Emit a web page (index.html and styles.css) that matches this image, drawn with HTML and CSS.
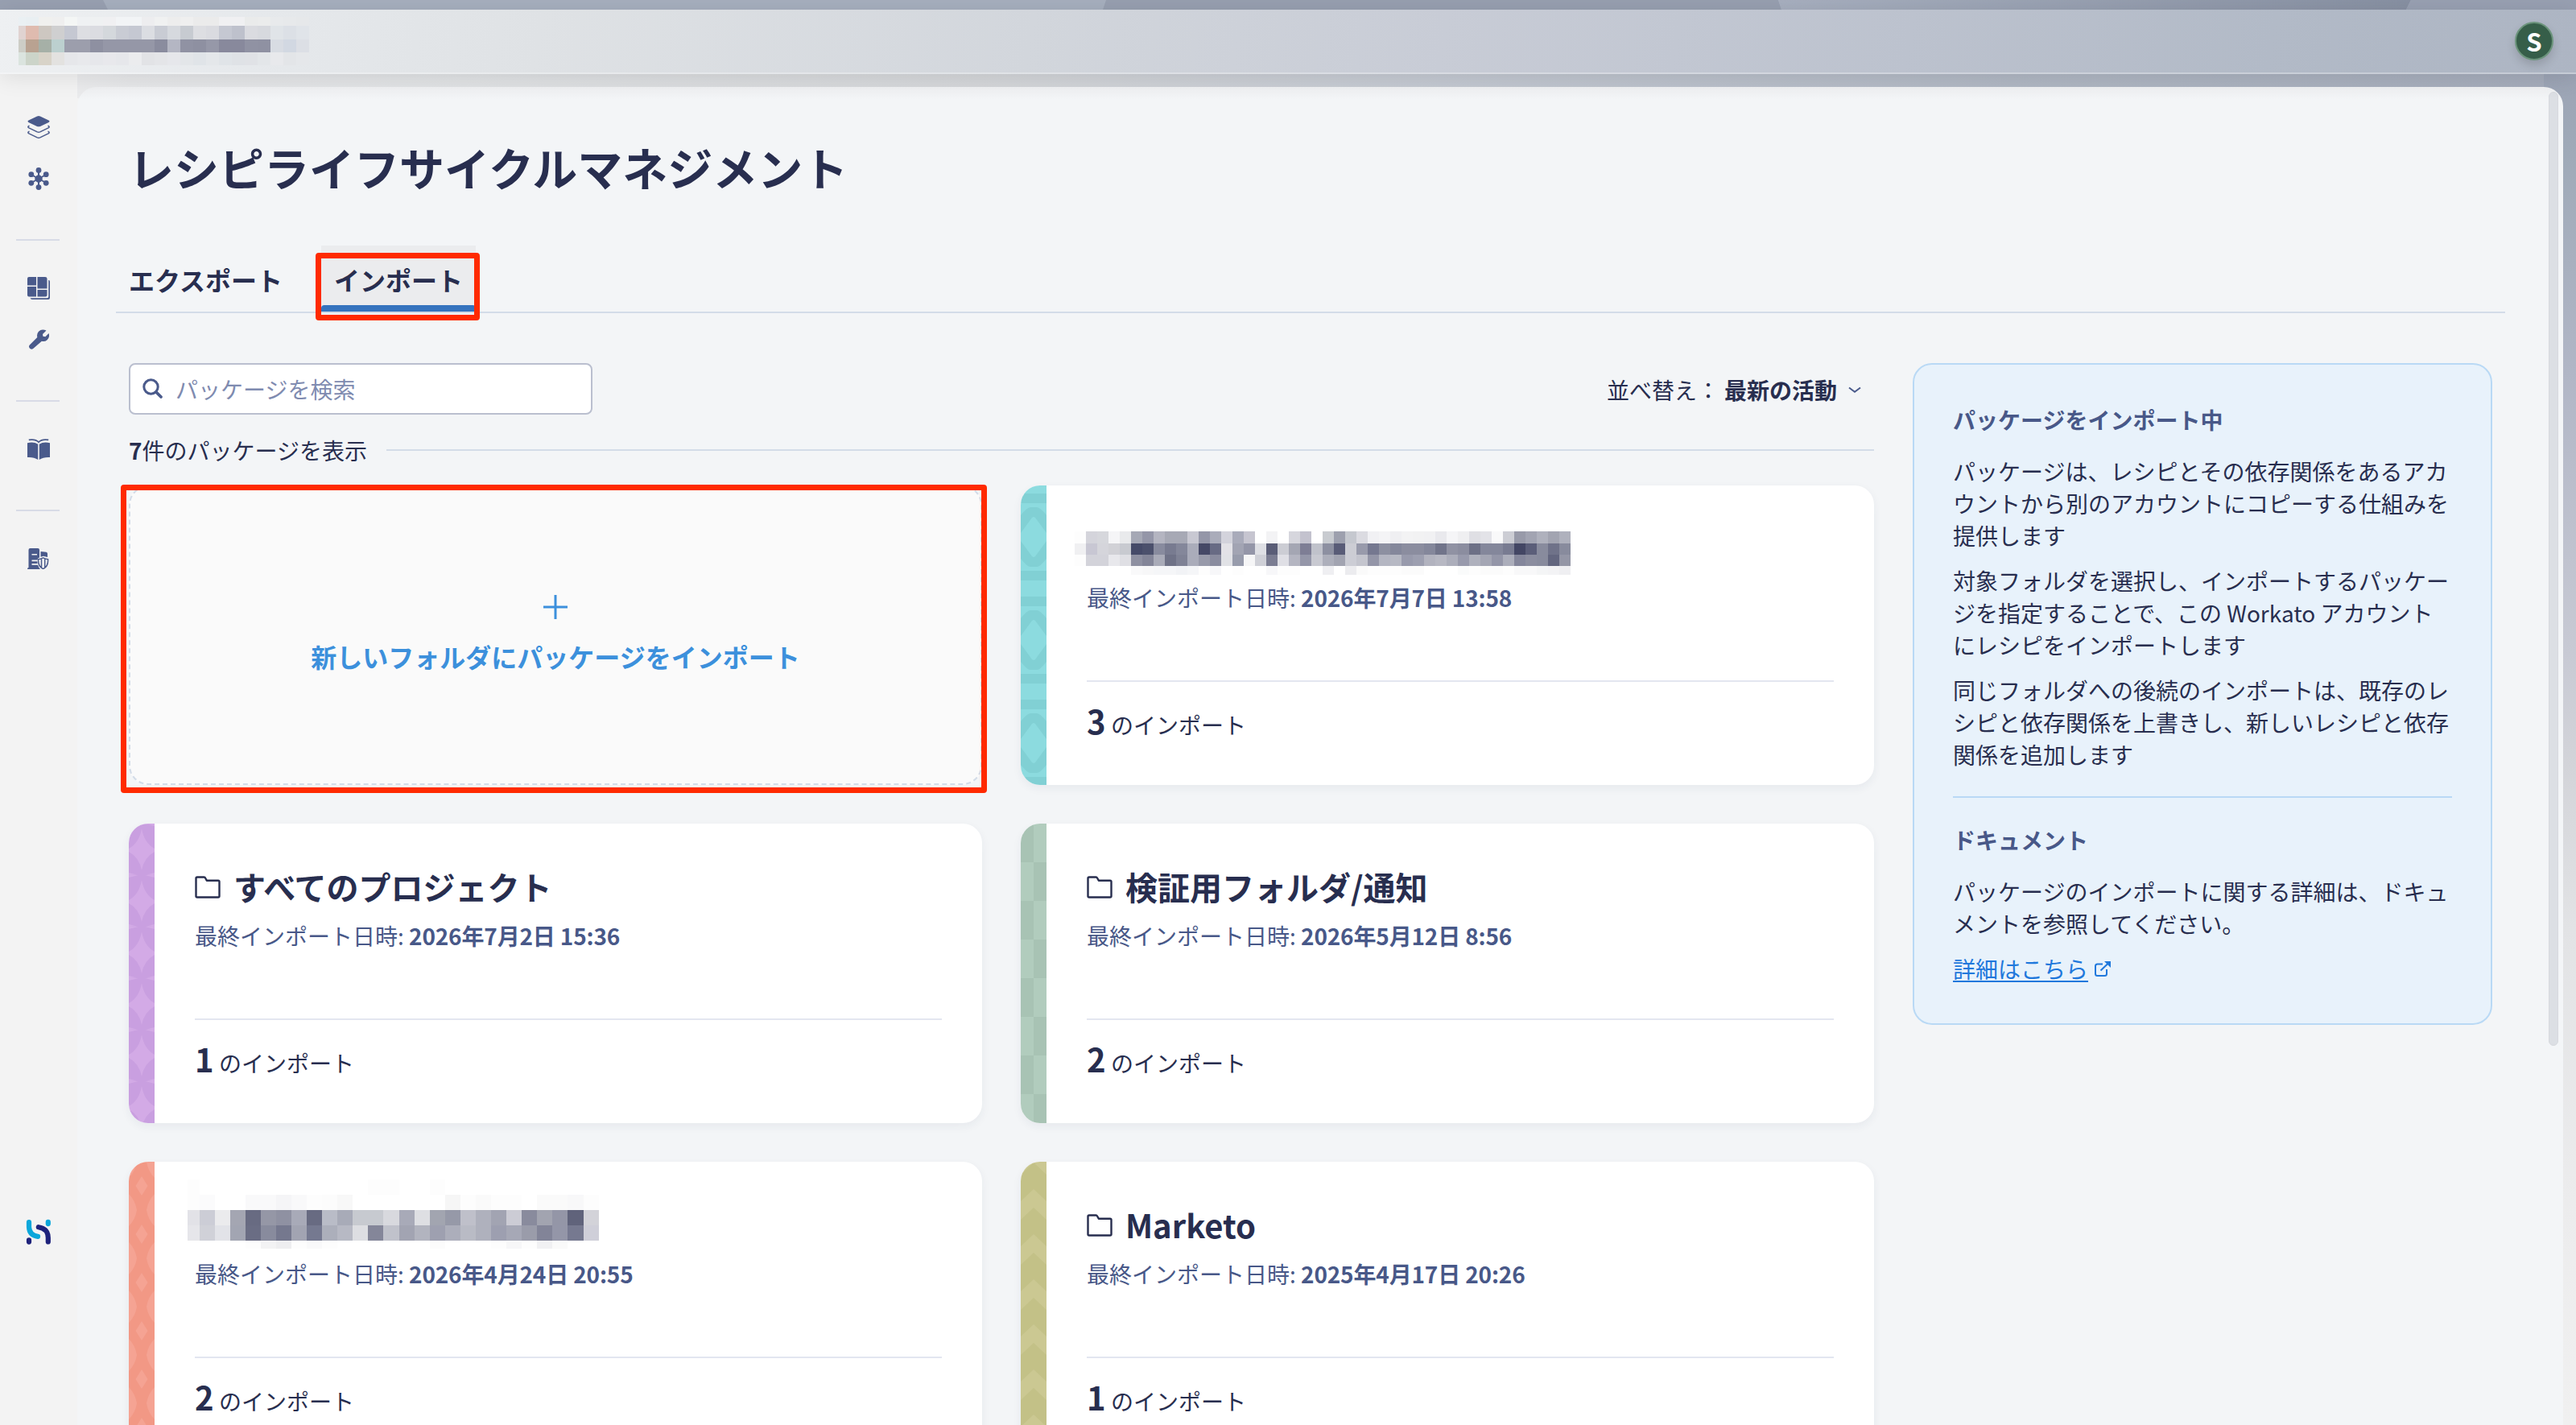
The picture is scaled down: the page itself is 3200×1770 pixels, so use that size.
FILE: index.html
```html
<!DOCTYPE html>
<html lang="ja">
<head>
<meta charset="utf-8">
<title>レシピライフサイクルマネジメント</title>
<link rel="stylesheet" href="styles.css">
</head>
<body>
<svg class="defs" width="0" height="0" aria-hidden="true">
  <defs>
    <pattern id="p-teal" width="32" height="128" patternUnits="userSpaceOnUse">
      <rect width="32" height="128" fill="#8cdbdf"/>
      <path fill="#81d0d4" d="M0 10h32v12H0zM0 106h32v12H0zM0 37Q8 27 12 27h8q4 0 12 10v54q-8 10-12 10h-8q-4 0-12-10z"/>
      <path fill="#8cdbdf" d="M0 59 14 40q2-2 4 0l14 19v10L18 88q-2 2-4 0L0 69z"/>
    </pattern>
    <pattern id="p-purple" width="32" height="64" patternUnits="userSpaceOnUse">
      <rect width="32" height="64" fill="#c99fe0"/>
      <path fill="#d3aae6" d="M16 6Q19 24 32 31v4Q19 42 16 58 13 42 0 35v-4Q13 24 16 6zM0 61l10 2.5L0 64zM32 61l-10 2.5 10 .5zM0 0h12L0 3zM32 0H20l12 3z"/>
    </pattern>
    <pattern id="p-green" width="32" height="96" patternUnits="userSpaceOnUse">
      <rect width="32" height="96" fill="#a8c3b4"/>
      <path fill="#b1ccbd" d="M16 0h16v48H16zM0 48h16v48H0z"/>
    </pattern>
    <pattern id="p-coral" width="32" height="60" patternUnits="userSpaceOnUse">
      <rect width="32" height="60" fill="#f29885"/>
      <path fill="#f5a393" d="M16 18l7.5 12L16 42 8.500 30zM0 0h10Q8 12 0 20zM32 0H22q2 12 10 20zM0 60h10Q8 48 0 40zM32 60H22q2-12 10-20z"/>
    </pattern>
    <pattern id="p-olive" width="32" height="56" patternUnits="userSpaceOnUse">
      <rect width="32" height="56" fill="#c3c187"/>
      <path fill="#cbc892" d="M16 34l16 15v23L16 57 0 72V49zM16-22l16 15v23L16 1 0 16V-7z"/>
    </pattern>
    <symbol id="folder" viewBox="0 0 32 28"><path d="M3 1.500h8.500q1 0 1.500 1l1.800 3.200H29q1.500 0 1.500 1.500V25q0 1.500-1.500 1.500H3q-1.500 0-1.500-1.500V3q0-1.500 1.500-1.500z" fill="none" stroke="#282e4f" stroke-width="2.400" stroke-linejoin="round"/></symbol>
  </defs>
</svg>

<div class="app">
  <div class="strip">
    <svg width="3200" height="12"><defs><linearGradient id="sg"><stop offset="0" stop-color="#a7afbf"/><stop offset="1" stop-color="#8790a2"/></linearGradient></defs>
      <rect width="3200" height="12" fill="#a6afbe"/><path d="M0 0h128l6 12H0z" fill="#98a0b1"/><path d="M1374 0h835l4 12H1370z" fill="#979fb0"/><path d="M2209 0h786l-6 12h-776z" fill="url(#sg)"/><path d="M2995 0h205v12h-211z" fill="#98a0b2"/></svg>
  </div>
  <header class="topbar">
    <svg class="mosaic" data-mosaic="workspace" width="373" height="60"></svg>
    <div class="avatar">S</div>
  </header>
  <div class="workspace">
    <nav class="sidebar">
      <svg width="28" height="28" viewBox="0 0 28 28"><path d="M14 0q1 0 2 .600l10.500 5q2 1.100 0 2.300L16 12.900q-2 .900-4 0L1.500 7.900q-2-1.200 0-2.300L12 .600Q13 0 14 0z" fill="#4a5a8b"/><path d="M2.500 12.200q-3 1.300-.5 2.700l10.300 5q1.700.700 3.400 0l10.300-5q2.500-1.400-.5-2.700M2.500 19.200q-3 1.300-.5 2.700l10.300 5q1.700.700 3.400 0l10.300-5q2.500-1.400-.5-2.700" fill="none" stroke="#4a5a8b" stroke-width="1.500"/></svg>
      <svg class="hub" width="28" height="28" viewBox="0 0 28 28"><g fill="#4a5a8b" stroke="#4a5a8b"><path d="M14 4v20M5 9l18 10M5 19 23 9" stroke-width="2"/><circle cx="14" cy="14" r="4.200"/><g stroke="none"><circle cx="14" cy="3.400" r="3.400"/><circle cx="14" cy="24.600" r="3.400"/><circle cx="4.800" cy="8.700" r="3.400"/><circle cx="23.200" cy="8.700" r="3.400"/><circle cx="4.800" cy="19.300" r="3.400"/><circle cx="23.200" cy="19.300" r="3.400"/></g></g></svg>
      <hr class="rule">
      <svg width="28" height="28" viewBox="0 0 28 28"><path fill="#4a5a8b" d="M2 0h9v10.500H0V2q0-2 2-2zM12.500 0H22q2.500 0 2.500 2v12.500h-12zM0 12h11v12.500H2q-2 0-2-2zM12.500 16h12v6.500q0 2-2 2h-10zM26.300 4H27q1 .500 1 2v20q0 2-2 2H6q-2 0-2.500-1.700h21q1.800 0 1.800-1.800z"/></svg>
      <svg class="wrench" width="28" height="26" viewBox="0 0 28 26"><path fill="#4a5a8b" d="M24.500 2.600 20 7l.400 2.800 3 .500 4.200-4.200q1.500 4.800-2 8.100-3 2.600-6.700 1.600L8.200 25q-2 1.600-4.200-.300-1.900-2.100-.200-4.200L13.300 11q-1-4.200 1.700-7.200 3.800-3.800 9.500-1.200z"/></svg>
      <hr class="rule rule-b">
      <svg width="28" height="26" viewBox="0 0 28 26"><path fill="#4a5a8b" d="M0 5.200q8-2 13.200 1.600V26Q8 22.500 0 23zM28 5.200q-8-2-13.200 1.600V26q5.200-3.500 13.200-3z"/><path d="M1.800 1.400Q10 0 14 4.200 18 0 26.200 1.400" fill="none" stroke="#4a5a8b" stroke-width="1.800"/></svg>
      <hr class="rule rule-c">
      <svg width="28" height="26" viewBox="0 0 28 26"><path fill="#4a5a8b" d="M1.500 24V2q0-2 2-2H13q2 0 2 2v9.500q-2.500.500-2.500 3H5.500v1.800h7V19h-7v1.800h7.500q1 3 3 5.200H0q0-2 1.500-2zM5.500 7v1.600H12V7zM16.500 4l7 .700q1.500.300 1.500 2V11l-5-1.300-3.500 1z"/><path d="M19.600 11.800q3 1.500 6 2 .5 9.200-6 11.800-6.500-2.600-6-11.800 3-.500 6-2zM17.500 13.500v10M21.700 13.500v10" fill="none" stroke="#4a5a8b" stroke-width="1.500"/></svg>
      <svg class="brand" width="34" height="34" viewBox="0 0 34 34" fill="none" stroke-width="6.200" stroke-linecap="round"><path d="M5 5v5q0 11.500 11 12.800M28.800 4.900v2.200" stroke="#0ba7db"/><path d="M28.800 29.500v-5q0-11.500-12-13.300M5 27.400v2.200" stroke="#1e227b"/></svg>
    </nav>
    <main class="main">
      <h1>レシピライフサイクルマネジメント</h1>
      <div class="tabs"><a class="tab">エクスポート</a><a class="tab active">インポート</a></div>
      <div class="content">
        <section class="list">
          <div class="toolbar">
            <div class="search"><svg width="26" height="26" viewBox="0 0 26 26"><circle cx="10.500" cy="10.500" r="8.700" fill="none" stroke="#4a5a8b" stroke-width="3"/><path d="M17 17l6 6" stroke="#4a5a8b" stroke-width="3.800" stroke-linecap="round"/></svg><span>パッケージを検索</span></div>
            <div class="sort"><span>並べ替え：</span><b>最新の活動</b><svg width="16" height="9" viewBox="0 0 16 9"><path d="M1 1.500l7 5.300 7-5.300" fill="none" stroke="#4a5a8b" stroke-width="2"/></svg></div>
          </div>
          <div class="count"><span><b>7</b>件のパッケージを表示</span></div>
          <div class="grid">
            <div class="card add">
              <svg width="30" height="30" viewBox="0 0 30 30"><path d="M15 0v30M0 15h30" stroke="#3c90dc" stroke-width="3"/></svg>
              <span>新しいフォルダにパッケージをインポート</span>
            </div>
            <article class="card">
              <svg class="stripe" width="32" height="372"><rect width="32" height="372" fill="url(#p-teal)"/></svg>
              <div class="body"><div class="title redacted"><svg class="mosaic m-first" data-mosaic="first" width="630" height="60"></svg></div>
                <p class="meta">最終インポート日時: <b>2026年7月7日 13:58</b></p><p class="total"><b>3</b> のインポート</p></div>
            </article>
            <article class="card">
              <svg class="stripe" width="32" height="372"><rect width="32" height="372" fill="url(#p-purple)"/></svg>
              <div class="body"><div class="title"><svg width="32" height="28"><use href="#folder"/></svg><h2>すべてのプロジェクト</h2></div>
                <p class="meta">最終インポート日時: <b>2026年7月2日 15:36</b></p><p class="total"><b>1</b> のインポート</p></div>
            </article>
            <article class="card">
              <svg class="stripe" width="32" height="372"><rect width="32" height="372" fill="url(#p-green)"/></svg>
              <div class="body"><div class="title"><svg width="32" height="28"><use href="#folder"/></svg><h2>検証用フォルダ/通知</h2></div>
                <p class="meta">最終インポート日時: <b>2026年5月12日 8:56</b></p><p class="total"><b>2</b> のインポート</p></div>
            </article>
            <article class="card">
              <svg class="stripe" width="32" height="372"><rect width="32" height="372" fill="url(#p-coral)"/></svg>
              <div class="body"><div class="title redacted"><svg class="mosaic m-second" data-mosaic="second" width="512" height="86"></svg></div>
                <p class="meta">最終インポート日時: <b>2026年4月24日 20:55</b></p><p class="total"><b>2</b> のインポート</p></div>
            </article>
            <article class="card">
              <svg class="stripe" width="32" height="372"><rect width="32" height="372" fill="url(#p-olive)"/></svg>
              <div class="body"><div class="title"><svg width="32" height="28"><use href="#folder"/></svg><h2>Marketo</h2></div>
                <p class="meta">最終インポート日時: <b>2025年4月17日 20:26</b></p><p class="total"><b>1</b> のインポート</p></div>
            </article>
          </div>
        </section>
        <aside class="panel">
          <h3>パッケージをインポート中</h3>
          <p>パッケージは、レシピとその依存関係をあるアカウントから別のアカウントにコピーする仕組みを提供します</p>
          <p>対象フォルダを選択し、インポートするパッケージを指定することで、この Workato アカウントにレシピをインポートします</p>
          <p>同じフォルダへの後続のインポートは、既存のレシピと依存関係を上書きし、新しいレシピと依存関係を追加します</p>
          <hr>
          <h3>ドキュメント</h3>
          <p>パッケージのインポートに関する詳細は、ドキュメントを参照してください。</p>
          <p class="more"><a>詳細はこちら</a><svg width="20" height="19" viewBox="0 0 20 19"><path d="M10 3.500H3.500Q1 3.500 1 6v9.500Q1 18 3.500 18h9q2.500 0 2.500-2.500V10M7.500 11.500 17 2.500" fill="none" stroke="#1f78dc" stroke-width="2"/><path d="M12 0h8v8z" fill="#1f78dc"/></svg></p>
        </aside>
      </div>
      <div class="scrollbar"></div>
    </main>
  </div>
  <div class="mark mark-tab"></div>
  <div class="mark mark-card"></div>
</div>
<script src="mosaic.js"></script>
</body>
</html>
```
FILE: styles.css
```css
* { box-sizing: border-box; }
body { margin: 0; font-family: "Noto Sans CJK JP", sans-serif; font-size: 28px; line-height: 40px; color: #282e4f; }
h1, h2, h3, p { margin: 0; }
svg { display: block; flex: none; }
.defs { position: absolute; }
.app { position: relative; width: 3200px; height: 1770px; overflow: hidden; display: flex; flex-direction: column; background: #f3f3f3; }
.strip { height: 12px; flex: none; }

.topbar {
  position: relative; z-index: 2; flex: none; height: 80px; padding: 0 28px 0 23px;
  display: flex; align-items: center; justify-content: space-between;
  border-bottom: 2px solid rgba(255, 255, 255, .3);
  background: linear-gradient(100deg, #eef0f2 0, #e6e9ec 10%, #dfe2e5 21%, #d2d6dc 40%, #c8ccd6 56%, #bcc2ce 74%, #b2bac7 88%, #adb5c3 100%);
  box-shadow: 0 4px 28px rgba(0, 0, 0, .1);
}
.avatar {
  width: 48px; height: 48px; border-radius: 50%; border: 2px solid #6c947c; background: #365e49; color: #fff;
  font-weight: 700; font-size: 31px; line-height: 43px; text-align: center; box-shadow: 0 6px 12px rgba(0, 0, 0, .15);
}

.workspace {
  flex: 1; min-height: 0; display: flex;
  background:
    linear-gradient(180deg, #9ca4b5 0, #9faab8 100px, #b1b6c6 370px, #c8cad4 720px, #d3d4d9 860px, #e2e3e5 1060px, #ececed 1400px, #f0f0f0 100%) right top / 40px 100% no-repeat,
    linear-gradient(90deg, #f1f1f2 0, #e6e7e9 5%, #e0e2e4 18%, #d4d6d9 38%, #c3c8d1 56%, #b0b7c3 78%, #a4abba 100%) left top / 100% 30px no-repeat,
    #f3f3f3;
}
.sidebar { width: 96px; background: #f3f3f3; display: flex; flex-direction: column; align-items: center; padding-top: 52px; }
.sidebar .hub { margin-top: 36px; }
.rule { width: 54px; height: 2px; border: 0; margin: 61px 2px 45px 0; background: #d8dbe6; flex: none; }
.rule-b { margin: 63px 2px 46px 0; }
.rule-c { margin: 62px 2px 46px 0; }
.sidebar .wrench { margin: 36px 2px 0 0; }
.sidebar .brand { margin-top: 806px; }

.main { position: relative; flex: 1; margin: 16px 16px 0 0; padding: 59px 72px 0 48px; border-radius: 24px 24px 0 0; background: linear-gradient(#eff0f2, #f3f5f7 16px); }
h1 { font-size: 56px; line-height: 80px; padding-left: 16px; font-weight: 700; }
.tabs { display: flex; gap: 32px; margin-top: 58px; border-bottom: 2px solid #d3dce8; }
.tab { position: relative; height: 82px; padding: 0 16px; line-height: 84px; font-size: 32px; font-weight: 700; }
.active { background: #ebecee; }
.active::after { content: ""; position: absolute; left: 0; right: 0; bottom: 0; height: 8px; border-radius: 4px 4px 0 0; background: #3573be; }
.content { display: flex; gap: 48px; align-items: flex-start; padding: 62px 16px 0; }
.list { width: 2168px; flex: none; }
.toolbar { display: flex; justify-content: space-between; align-items: center; }
.search { width: 576px; height: 64px; display: flex; align-items: center; gap: 14px; padding-left: 15px; border: 2px solid #babfcf; border-radius: 8px; background: #fff; color: #7f8bb0; }
.search span { padding-left: 1px; }
.sort { display: flex; align-items: center; padding: 2px 16px 0 0; }
.sort b { margin: 0 14px 0 6px; }
.count { display: flex; align-items: center; gap: 24px; margin: 24px 0; }
.count::after { content: ""; flex: 1; height: 2px; background: #d3dce8; }
.grid { display: grid; grid-template-columns: 1060px 1060px; grid-auto-rows: 372px; gap: 48px; }
.card { display: flex; border-radius: 24px; background: #fff; overflow: hidden; box-shadow: 0 4px 12px rgba(40, 46, 79, .06); }
.add { flex-direction: column; align-items: center; justify-content: center; gap: 18px; padding-top: 3px; border: 2px dashed #d3dce8; background: #fafafa; box-shadow: none; color: #3c90dc; font-size: 32px; font-weight: 700; line-height: 56px; }
.body { flex: 1; min-width: 0; padding: 50px 50px 0; }
.title { height: 56px; display: flex; align-items: center; gap: 16px; }
.title > svg:not(.mosaic) { margin-top: 2px; }
.redacted { align-items: flex-start; }
h2 { font-size: 40px; line-height: 56px; font-weight: 700; }
.meta { margin-top: 13px; color: #485888; }
.meta b { letter-spacing: -.17px; }
.total { margin-top: 83px; padding-top: 20px; border-top: 2px solid #e3e6f0; line-height: 56px; }
.total b { font-size: 40px; }
.m-first { margin: 2px 0 0 -15px; }
.m-second { margin: -28px 0 0 -9px; }

.panel { flex: none; width: 720px; padding: 48px; border: 2px solid #b9d9f5; border-radius: 24px; background: #e8f2fb; }
.panel h3 { font-size: 28px; line-height: 40px; color: #485888; margin-bottom: 24px; }
.panel p + p { margin-top: 16px; }
.panel hr { height: 2px; border: 0; margin: 32px 0; background: #b9d9f5; }
.more { display: flex; align-items: center; gap: 8px; color: #1f78dc; }
.more a { text-decoration: underline; text-decoration-thickness: 2px; text-underline-offset: 3px; }

.scrollbar { position: absolute; top: 6px; right: 6px; width: 12px; height: 1185px; border-radius: 6px; background: #dcdfe4; border: 1px solid #d7d9de; }
.mark { position: absolute; z-index: 3; border: 7px solid #ff2a00; border-radius: 4px; }
.mark-tab { left: 392px; top: 314px; width: 204px; height: 84px; }
.mark-card { left: 150px; top: 602px; width: 1076px; height: 383px; }
```
FILE: mosaic.js
```js
// Redacted names: each row is [top, height, colours]; the first cell may be narrower than the rest.
const mosaics = {
  workspace: { first: 9, cell: 16, rows: [
    [0, 11, "eaf0f3 e9eff2 f0f0ee efefef f4f6f5 eff1f3 eff1f2 f0f0f2 f2f4f6 f2f4f6 ededef f0f1f1 ededed efefef ebebeb ebebeb f0f0f2 f0f0f2 eaebeb ebecec e8eaec e7e9eb e6e8ea"],
    [11, 17, "e0d3d1 dfbbaf cdc7c1 cfcfd0 c5c8d2 dddee2 dbdce1 d4d8dc c9ccd4 c5c8d2 dbdde2 c9ccd4 d6d9de c7cbd1 dddee2 dadbe0 c5c8d2 bec1cc dadbe0 d7d9de e0e4e8 dce0e6 e0e4e9"],
    [28, 15.5, "cdcdc6 b9a291 a6b0a7 bcd0cf 9c9eac 9c9eac 8e90a1 9597a7 9597a7 9597a7 9597a7 8a8c9e b4b6c3 9092a3 8e90a1 9698a8 88899c 88899c 9092a3 8f91a2 d8dce3 d2d8e2 dcdfe5"],
    [43.5, 16.5, "dbe4df ccd4c9 d8d3c8 e3e2e0 e6e7ea e8e9ec e6e7eb e8e8ec e6e7eb ebecee e2e3e6 e4e5e8 e6e7eb e3e6e9 e0e4e8 e4e7ea e0e4e8 dfe2e6 e0e2e6 e3e6e9 e8e9ec e3e5e8 e5e7ea"]] },
  first: { first: 14, cell: 14, rows: [
    [5, 14.7, "fdfdfd d4d4db d6d7dc f5f5f7 e9eaec a5a8b5 9496a8 b4b5c1 a7a9b5 a7a9b5 c8c8d2 9496a8 aaacba d3d3dc a9abba c6c5d0 ffffff f3f3f5 ffffff d6d6dd c3c2ce ffffff c8cbd0 9da0ae c5c8cf dbdbe1 f1f1f4 f4f4f6 efeff2 f3f3f4 f2f2f3 f1f1f3 e9e9ed f5f5f7 efeff1 dfdfe4 e3e3e8 f9f9fa cccdd4 989aa9 a2a4b2 afb1bd a2a4b1 afb1bd"],
    [19.7, 14, "f0f0f2 c8c7d3 d5d5db d1d1d6 c8cad0 454a68 4b506c 888b9e 787b90 84879a aaacba 454866 686b84 e3e2e7 a2a4b3 9496a8 dedfe4 5a5d77 cccdd4 a4a6b3 7e7e95 c0c2cb 8d90a1 595c77 cccdd4 989aab 757890 8d90a1 84879b 8b8d9f 8b8d9f 84879b 71748a 9092a3 8b8d9f 6d7086 84879b 84879b 787b91 434664 5b5e79 888b9d 6f7289 888b9d"],
    [33.7, 14, "fdfdfd d3d3da d3d3da e8e8ec dfdfe4 8e90a1 838598 a9abb8 6f7287 7f8295 aaacba 989aaa 8a8c9f e1e2e6 989cac f6f6f7 cfd0d7 7b7d92 dfdfe5 b4b5c1 9597a9 c8c9d1 adafbb a2a4b1 cccdd5 c4c5ce 9496a8 b4b6c2 b7b9c4 989aac 9d9fb0 b2b3bf b7b8c3 acaebb 989aac afb1bd a4a6b4 9496a8 acaebb 84869b 8b8d9f 888b9d 63667f 9496a6"],
    [47.7, 11, "ffffff ffffff ffffff ffffff ffffff f9f9fa f7f7f8 f5f6f8 f5f6f8 f2f3f6 f5f6f8 fdfdfd f7f7f9 ffffff fdfdfd ffffff ffffff f7f7f9 fdfdfd fdfdfd ffffff ffffff efeff2 ffffff ececef fafafa fdfdfd fdfdfd fdfdfd fbfbfb fbfbfb ffffff ffffff ffffff fafbfb fdfdfd fbfbfb fbfbfb fdfdfd f8f8f9 f8f8f9 f4f5f6 f3f3f5 efeff2"]] },
  second: { first: 14.5, cell: 19.08, rows: [
    [0, 19, "fdfdfd ffffff ffffff ffffff ffffff ffffff ffffff ffffff ffffff ffffff ffffff ffffff fdfdfd fdfdfd ffffff ffffff fdfdfd"],
    [19, 19, "fdfdfd fbfbfc ffffff ffffff f9f9fa f9f9fa f5f5f7 f9f9fa fdfdfd fcfcfc f8f8f8 ffffff ffffff ffffff ffffff ffffff ffffff f6f6f6 fdfdfd fafafa fdfdfd fdfdfd ffffff fafafa fafafa f8f8f9 fdfdfd"],
    [38, 19, "e2e2e7 cccdd6 ebebed a4a6b2 686b82 9597a6 8f91a2 a8aab8 686b82 b9bcc7 a8abb8 c7cad0 c7cad0 d8d9de a8aab8 dedfe3 a2a5b0 9699a8 bfc0ca afb1bd a2a4b2 ccccd5 898b9d a2a4b0 9496a7 60637b d3d3d9"],
    [57, 19, "e6e6ea d0d1d8 e2e3e8 a2a5b2 6a6d84 888b9d 75788e a2a4b2 757990 acafbb b7b9c4 dddee2 848699 c0c2cb a2a4b2 b2b4bf 9ea0b0 acaebb b9bbc5 afb1bd 9d9fb0 a6a8b6 9a9caa 828498 9496a8 767990 cfcfd9"],
    [76, 10, "ffffff ffffff ffffff ffffff fdfdfd f3f3f4 eeeef0 fdfdfd f9f9fa fdfdfd ffffff ffffff ffffff ffffff ffffff ffffff fcfcfc ffffff ffffff ffffff fdfdfd f7f7f8 fdfdfd f1f1f3 fafafa ffffff ffffff"]] }
};
document.querySelectorAll("[data-mosaic]").forEach(svg => {
  const m = mosaics[svg.dataset.mosaic];
  m.rows.forEach(([y, h, colours]) => colours.split(" ").forEach((c, i) => {
    const r = document.createElementNS("http://www.w3.org/2000/svg", "rect");
    r.setAttribute("x", i ? m.first + (i - 1) * m.cell : 0);
    r.setAttribute("y", y);
    r.setAttribute("width", i ? m.cell : m.first);
    r.setAttribute("height", h);
    r.setAttribute("fill", "#" + c);
    r.setAttribute("shape-rendering", "crispEdges");
    svg.appendChild(r);
  }));
});
```
